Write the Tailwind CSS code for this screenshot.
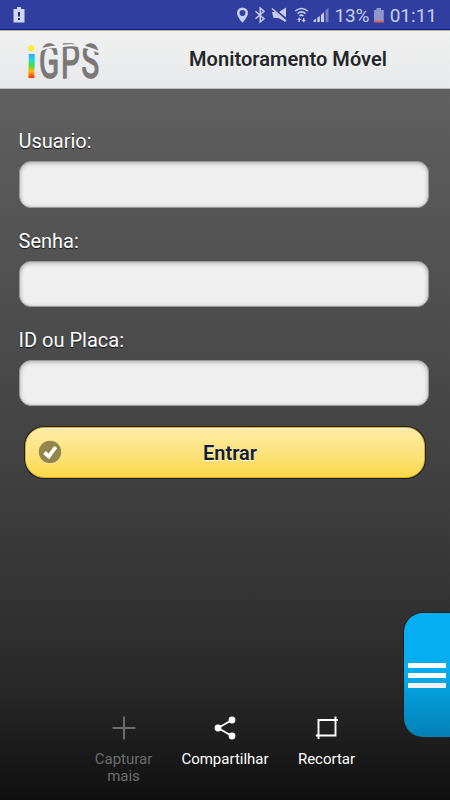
<!DOCTYPE html>
<html lang="pt">

<head>
    <meta charset="UTF-8" />
    <title>Monitoramento Móvel</title>
    <meta name="viewport" content="width=device-width, initial-scale=1.0" />
    <script src="https://cdn.jsdelivr.net/npm/@tailwindcss/browser@4"></script>
</head>

<body class="font-[Roboto,sans-serif] bg-[#111]">
    <div class="relative w-[450px] h-[800px] overflow-hidden flex flex-col bg-[linear-gradient(#666_0px,#606060_90px,#404040_480px,#333_600px,#262626_700px,#101010_800px)]">
        <!-- Status bar -->
        <div class="h-[30px] shrink-0 flex items-center justify-between pl-[13px] pr-[13px] bg-[#303f9f] border-b border-[#0b1c83] text-[#c9cdec]">
            <svg class="w-3 h-4" viewBox="0 0 12 16">
                <path fill="#d2d6f2" d="M4 0h4v2h3.5v13.500H.5V2H4z" />
                <path fill="#1b2b90" d="M5 5h2v4.500H5zM5 11h2v2H5z" />
            </svg>
            <div class="flex items-center h-full">
                <svg class="w-[202px] h-[30px] -mr-[202px] shrink-0" viewBox="235 0 202 30" fill="#c9cdec">
                    <!-- location -->
                    <path fill-rule="evenodd" d="M242.500 7.500a5.500 5.500 0 0 0-5.500 5.500c0 4 5.500 9.800 5.500 9.800s5.500-5.800 5.500-9.800a5.500 5.500 0 0 0-5.500-5.500zm0 2.600a2.900 2.900 0 1 1 0 5.800 2.900 2.900 0 0 1 0-5.800z" />
                    <!-- bluetooth -->
                    <path fill="none" stroke="#c9cdec" stroke-width="1.500" d="M255.500 11.300l8.500 7.400-3.800 3.200V8.100l3.800 3.200-8.500 7.400" />
                    <!-- muted -->
                    <path d="M272 12h3l10.500 8.500v1.500l-7-4h-5zM279 12l7-4.500v10z" />
                    <path fill="none" stroke="#303f9f" stroke-width="1.200" d="M273.500 8l13.500 11.800" />
                    <path fill="none" stroke="#c9cdec" stroke-width="1.600" d="M272 8.500l14 12.500" />
                    <!-- wifi -->
                    <path fill="none" stroke="#c9cdec" stroke-width="1.600" d="M295.300 11q6.200-5 12.400 0M297.500 13.600q4-3.300 8 0M299.500 15.900q2-1.500 4 0" />
                    <path d="M299.200 17.500l2.200 2.500h-1.500v2h-1.400v-2H297zM303.700 22.500l-2.200-2.500h1.500v-2h1.400v2h1.500z" />
                    <!-- signal -->
                    <path d="M313.500 20.500l2.500-1.900V22h-2.500zM317.200 18l2.600-2.300V22h-2.600zM321 15l3-3V22h-3z" />
                    <path opacity=".45" d="M325.500 10.500l3-3V22h-3z" />
                    <!-- battery -->
                    <path fill="#8f97cf" d="M376.500 8h4.500v2h2.800v11.500H374V10h2.500z" />
                    <path fill="#df6450" d="M374 20.500h9.800v2H374z" />
                </svg>
                <div class="w-[202px] flex text-[19px] leading-[30px] pt-[2px] whitespace-nowrap">
                    <span class="ml-[99.5px] w-[55.5px] tracking-[-0.2px]">13%</span>
                    <span>01:11</span>
                </div>
            </div>
        </div>

        <!-- Header -->
        <header class="h-[59px] shrink-0 flex items-center border-t border-[#b5b5aa] border-b border-b-[#b9bcbc] bg-linear-to-b from-[#f0f0f0] to-[#e7e9ea]">
            <svg class="w-20 h-[56px] ml-6 shrink-0 overflow-visible" viewBox="24 31 80 56" font-family="Roboto, sans-serif">
                <defs>
                    <linearGradient id="rainbow" gradientUnits="userSpaceOnUse" x1="0" y1="41" x2="0" y2="77">
                        <stop offset="0" stop-color="#f8ef3a" />
                        <stop offset=".25" stop-color="#f8ef3a" />
                        <stop offset=".3" stop-color="#409cff" />
                        <stop offset=".48" stop-color="#20d5e6" />
                        <stop offset=".66" stop-color="#42e044" />
                        <stop offset=".82" stop-color="#ffb511" />
                        <stop offset="1" stop-color="#ff2a10" />
                    </linearGradient>
                </defs>
                <text x="26" y="77" font-size="45" font-weight="700" textLength="11" lengthAdjust="spacingAndGlyphs" fill="url(#rainbow)">i</text>
                <text x="39" y="76.500" font-size="48" font-weight="400" letter-spacing="3" textLength="62" lengthAdjust="spacingAndGlyphs" fill="#7b7777" stroke="#7b7777" stroke-width="1.600" stroke-linejoin="round">GPS</text>
                <!-- glint across the letters -->
                <path fill="none" stroke="#eee" stroke-width="2.200" d="M39 49.500Q48 45.500 59 46Q68 43 79 45Q88 46 99 51" />
            </svg>
            <h1 class="ml-[85px] text-[20px] leading-none font-semibold text-[#242729] tracking-[0.05px] whitespace-nowrap -mt-px [text-shadow:0_1px_1px_#fff]">Monitoramento Móvel</h1>
        </header>

        <!-- Login form -->
        <form class="px-[18.5px] pt-[40px] text-[20px] text-white">
            <label class="block leading-[24px] mb-[8px] [text-shadow:0_1px_1px_#111]" for="usuario">Usuario:</label>
            <input id="usuario" type="text" class="block w-[410px] h-[46.5px] rounded-[12px] border border-[#999] bg-[#efefef] shadow-[inset_0_1px_4px_rgba(0,0,0,.3)]" />
            <label class="block leading-[24px] mt-[21.5px] mb-[7.5px] [text-shadow:0_1px_1px_#111]" for="senha">Senha:</label>
            <input id="senha" type="password" class="block w-[410px] h-[46px] rounded-[12px] border border-[#999] bg-[#efefef] shadow-[inset_0_1px_4px_rgba(0,0,0,.3)]" />
            <label class="block leading-[24px] mt-[21.5px] mb-[8px] [text-shadow:0_1px_1px_#111]" for="placa">ID ou Placa:</label>
            <input id="placa" type="text" class="block w-[410px] h-[46px] rounded-[12px] border border-[#999] bg-[#efefef] shadow-[inset_0_1px_4px_rgba(0,0,0,.3)]" />
            <button type="button" class="flex items-center w-[400px] h-[51px] mt-[20.5px] ml-[6px] pl-[12.5px] rounded-[19px] border border-[#e6ad18] bg-linear-to-b from-[#fdeca6] to-[#fbd947] shadow-[0_0_0_1px_#13212b,inset_0_1px_1px_#fff6c7] text-[#141c30] font-semibold">
                <svg class="w-6 h-6 shrink-0" viewBox="0 0 24 24">
                    <circle cx="12" cy="13" r="11" fill="#fff2b0" />
                    <circle cx="12" cy="12" r="11.200" fill="#93864a" />
                    <path fill="none" stroke="#fff" stroke-width="3.800" d="M6.500 12.500l4.300 4L17.700 7" />
                </svg>
                <span class="w-[336px] text-center pt-px [text-shadow:0_1px_0_#fff]">Entrar</span>
            </button>
        </form>

        <!-- Side menu tab -->
        <div class="absolute right-0 top-[613px] w-[46px] h-[124px] rounded-l-[19px] bg-linear-to-b from-[#04aef0] from-45% to-[#0480b4] shadow-[0_0_0_1px_#24201c] flex flex-col justify-center gap-[5px] pl-1">
            <div class="w-[38px] h-[5px] bg-white"></div>
            <div class="w-[38px] h-[5px] bg-white"></div>
            <div class="w-[38px] h-[5px] bg-[#f1f1f1]"></div>
        </div>

        <!-- Capture toolbar -->
        <nav class="mt-auto h-[86px] shrink-0 flex pl-[73px] text-[15px] leading-[17px] text-center text-white">
            <div class="w-[101px] flex flex-col items-center text-[#6d6d6d]">
                <svg class="w-6 h-6 mt-[2px] mb-[10.5px]" viewBox="0 0 24 24" fill="none" stroke="currentColor" stroke-width="2">
                    <path d="M12 .5v23M.5 12h23" />
                </svg>
                <span>Capturar<br />mais</span>
            </div>
            <div class="w-[102px] flex flex-col items-center">
                <svg class="w-6 h-6 mt-[2px] mb-[10.5px]" viewBox="0 0 24 24" fill="#fff">
                    <path fill="none" stroke="#fff" stroke-width="1.800" d="M19 4L5 12l14 8" />
                    <circle cx="19" cy="4" r="3.400" />
                    <circle cx="5" cy="12" r="3.400" />
                    <circle cx="19" cy="20" r="3.400" />
                </svg>
                <span>Compartilhar</span>
            </div>
            <div class="w-[101px] flex flex-col items-center">
                <svg class="w-6 h-6 mt-[2px] mb-[10.5px]" viewBox="0 0 24 24" fill="none" stroke="#fff" stroke-width="1.900">
                    <path d="M20.500 .5v19H.8M3.500 23V4h19.500" />
                </svg>
                <span>Recortar</span>
            </div>
        </nav>
    </div>
</body>

</html>
